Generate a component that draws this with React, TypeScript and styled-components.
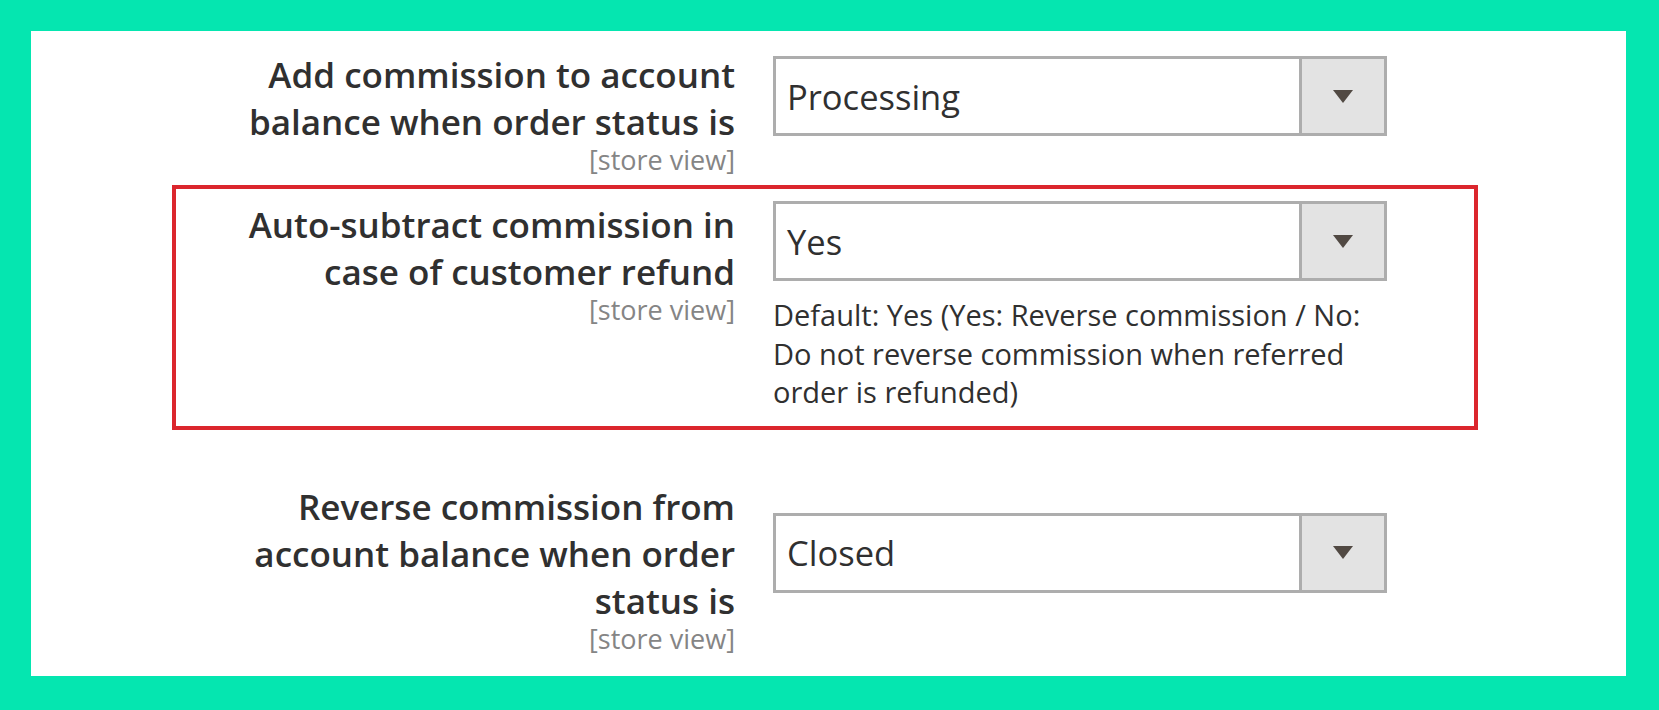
import React from 'react';
import styled, { createGlobalStyle } from 'styled-components';

const GlobalStyle = createGlobalStyle`
	html, body {
		margin: 0;
		padding: 0;
		background: #05e6b0;
	}
	body {
		font-family: 'Open Sans', 'Liberation Sans', sans-serif;
	}
`;

const Frame = styled.div`
	box-sizing: border-box;
	width: 1659px;
	height: 710px;
	padding: 31px 33px 34px 31px;
	background: #05e6b0;
`;

const Panel = styled.div`
	box-sizing: border-box;
	height: 100%;
	background: #ffffff;
	padding: 4px 0 0 141px;
`;

const Row = styled.div<{ $highlight?: boolean; $spaceBefore?: number; $padBottom?: number }>`
	box-sizing: border-box;
	width: 1306px;
	display: grid;
	grid-template-columns: 559px 614px;
	column-gap: 38px;
	align-items: start;
	padding: 12px 0 ${props => props.$padBottom ?? 6}px 0;
	margin-top: ${props => props.$spaceBefore ?? 0}px;
	border: 4px solid ${props => (props.$highlight ? '#db262d' : 'transparent')};
`;

const Label = styled.div`
	padding-left: 30px;
	text-align: right;
	color: #303030;
	font-size: 35px;
	font-weight: 600;
	line-height: 47px;
`;

const Scope = styled.span`
	display: block;
	color: #858585;
	font-size: 27px;
	font-weight: 400;
	line-height: 30px;
`;

const Control = styled.div<{ $offset: number }>`
	padding-top: ${props => props.$offset}px;
`;

const Select = styled.div`
	box-sizing: border-box;
	height: 80px;
	display: flex;
	align-items: stretch;
	border: 3px solid #adadad;
	background: #ffffff;
`;

const SelectValue = styled.div`
	flex: 1;
	display: flex;
	align-items: center;
	padding-left: 11px;
	color: #303030;
	font-size: 34.5px;
	font-weight: 400;
`;

const SelectButton = styled.div`
	width: 82px;
	display: flex;
	align-items: center;
	justify-content: center;
	border-left: 3px solid #adadad;
	background: #e3e3e3;
`;

const Note = styled.p`
	margin: 15px 0 0 0;
	color: #303030;
	font-size: 29px;
	line-height: 38.5px;
`;

const Arrow = () => (
	<svg width='20' height='13' viewBox='0 0 20 13'>
		<polygon points='0,0 20,0 10,13' fill='#514943' />
	</svg>
);

interface DropdownProps {
	value: string;
}

const Dropdown = ({ value }: DropdownProps) => (
	<Select>
		<SelectValue>{value}</SelectValue>
		<SelectButton>
			<Arrow />
		</SelectButton>
	</Select>
);

const App = () => (
	<>
		<GlobalStyle />
		<Frame>
			<Panel>
				<Row>
					<Label>
						Add commission to account balance when order status is
						<Scope>[store view]</Scope>
					</Label>
					<Control $offset={5}>
						<Dropdown value='Processing' />
					</Control>
				</Row>
				<Row $highlight $padBottom={14}>
					<Label>
						Auto-subtract commission in case of customer refund
						<Scope>[store view]</Scope>
					</Label>
					<Control $offset={0}>
						<Dropdown value='Yes' />
						<Note>
							Default: Yes (Yes: Reverse commission / No: Do not reverse commission when referred order is
							refunded)
						</Note>
					</Control>
				</Row>
				<Row $spaceBefore={37}>
					<Label>
						Reverse commission from account balance when order status is
						<Scope>[store view]</Scope>
					</Label>
					<Control $offset={30}>
						<Dropdown value='Closed' />
					</Control>
				</Row>
			</Panel>
		</Frame>
	</>
);

export default App;
